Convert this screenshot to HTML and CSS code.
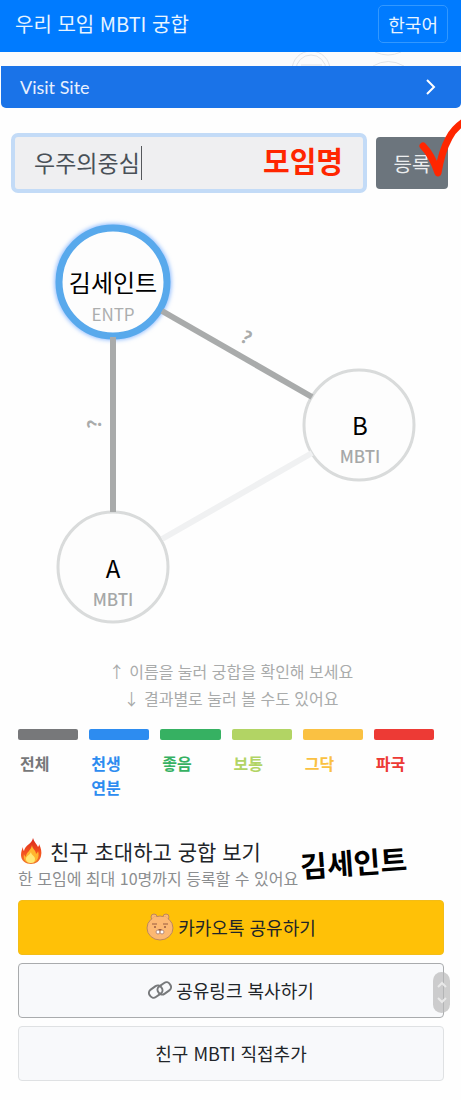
FILE: index.html
```
<!DOCTYPE html>
<html lang="ko">
<head>
  <meta charset="UTF-8">
  <meta name="viewport" content="width=device-width, initial-scale=1">
  <title>우리 모임 MBTI 궁합</title>
  <link rel="stylesheet" href="styles.css">
</head>
<body>
<header class="navbar">
  <h1>우리 모임 MBTI 궁합</h1>
  <button type="button" class="lang">한국어</button>
</header>
<div class="strip">
  <svg width="120" height="14" viewBox="0 0 120 14" fill="none" stroke="#e1e3e6" aria-hidden="true">
    <circle cx="20" cy="18" r="19"/>
    <circle cx="20" cy="18" r="15"/>
    <path d="M10 13h21"/>
    <path d="M84 0q13 6 26 0M82 14q15-9 31 0"/>
  </svg>
</div>
<a class="visit" href="#graph">
  <span>Visit Site</span>
  <svg width="12" height="18" viewBox="0 0 12 18" fill="none" stroke="#fff" stroke-width="2" aria-hidden="true"><path d="M2 2l7 7-7 7"/></svg>
</a>

<form class="group-form">
  <div class="field">
    <input type="text" aria-label="모임명" value="우주의중심">
    <span class="caret"></span>
    <span class="field-note">모임명</span>
  </div>
  <div class="submit">
    <button type="button">등록</button>
    <svg class="check" width="44" height="64" viewBox="0 0 44 64" fill="none" stroke="#ff2600" stroke-linecap="round" stroke-linejoin="round" stroke-width="7" aria-hidden="true">
      <path d="M4 29Q13 38 19 56C21 44 25 30 30 21Q35 11 46 4"/>
    </svg>
  </div>
</form>

<svg class="graph" id="graph" viewBox="0 0 461 465">
  <defs>
    <filter id="glow" x="-20%" y="-20%" width="140%" height="140%"><feGaussianBlur stdDeviation="2"/></filter>
  </defs>
  <circle class="glow" cx="113" cy="89" r="54"/>
  <circle class="node me" cx="113" cy="89" r="54"/>
  <circle class="node" cx="359" cy="232" r="55"/>
  <circle class="node" cx="113" cy="374" r="55"/>
  <line class="edge" x1="113" y1="144" x2="113" y2="319"/>
  <line class="edge" x1="162" y1="118" x2="312" y2="204"/>
  <line class="edge off" x1="162" y1="346" x2="312" y2="260"/>
  <text class="name" x="113" y="99">김세인트</text>
  <text class="type" x="113" y="128">ENTP</text>
  <text class="name" x="360" y="242">B</text>
  <text class="type empty" x="360" y="270">MBTI</text>
  <text class="name" x="113" y="385">A</text>
  <text class="type empty" x="113" y="413">MBTI</text>
  <text class="mark" transform="translate(243 150) rotate(30)">?</text>
  <text class="mark" transform="translate(101 231) rotate(-90)">?</text>
</svg>

<main>
  <p class="hint">↑ 이름을 눌러 궁합을 확인해 보세요<br>↓ 결과별로 눌러 볼 수도 있어요</p>

  <div class="legend">
    <button type="button" class="all">전체</button>
    <button type="button" class="best">천생연분</button>
    <button type="button" class="good">좋음</button>
    <button type="button" class="soso">보통</button>
    <button type="button" class="meh">그닥</button>
    <button type="button" class="bad">파국</button>
  </div>

  <section class="invite">
    <h2>
      <svg width="22" height="26" viewBox="0 0 22 26" aria-hidden="true">
        <defs>
          <linearGradient id="fire" x1="0" y1="0" x2="0" y2="1">
            <stop offset="0" stop-color="#d9271b"/>
            <stop offset=".55" stop-color="#f4511e"/>
            <stop offset="1" stop-color="#ef7a2c"/>
          </linearGradient>
        </defs>
        <path fill="url(#fire)" d="M13 0c1 4 4 6 5 9 1-1 1-2 1-3 2 4 3 8 2 12-1 5-5 8-10 8S1 23 1 17c0-3 1-6 2-8 0 2 0 3 1 4 1-6 8-7 9-13z"/>
        <path fill="#ffb52e" d="M12 7c0 4 4 5 4 9 1-1 2-2 2-3 2 6-1 12-7 12s-8-4-7-9c0 1 1 2 2 3 0-5 5-6 6-12z"/>
        <path fill="#ffe875" d="M11 14c0 3 4 4 4 7s-2 4-4 4-5-1-5-4 4-4 5-7z"/>
      </svg>
      친구 초대하고 궁합 보기
    </h2>
    <p class="limit">한 모임에 최대 10명까지 등록할 수 있어요</p>
    <span class="signature">김세인트</span>
  </section>

  <div class="actions">
    <button type="button" class="btn kakao">
      <svg width="28" height="28" viewBox="0 0 28 28" aria-hidden="true">
        <g stroke="#bd875b" fill="#fcb873">
          <circle cx="8" cy="4" r="3"/>
          <circle cx="20" cy="4" r="3"/>
          <ellipse cx="14" cy="15" rx="13" ry="12"/>
        </g>
        <path fill="#fcb873" d="M6 5l4-2 2 4-4 2zM22 5l-4-2-2 4 4 2z"/>
        <path stroke="#9a5c43" fill="none" d="M6 11h5M17 11h5"/>
        <circle cx="9" cy="14" r="1" fill="#9a5c43"/>
        <circle cx="19" cy="14" r="1" fill="#9a5c43"/>
        <ellipse cx="12" cy="19" rx="2" ry="2" fill="#fff" stroke="#b98b78"/>
        <ellipse cx="16" cy="19" rx="2" ry="2" fill="#fff" stroke="#b98b78"/>
        <path fill="#9a5c43" d="M12 16h4l-2 2z"/>
      </svg>
      카카오톡 공유하기
    </button>
    <button type="button" class="btn copy">
      <svg width="24" height="20" viewBox="0 0 24 20" fill="none" stroke="#77797b" stroke-width="2" aria-hidden="true">
        <rect x="1" y="7" width="14" height="9" rx="4" transform="rotate(-35 8 12)"/>
        <rect x="9" y="4" width="14" height="9" rx="4" transform="rotate(-35 16 8)"/>
      </svg>
      공유링크 복사하기
    </button>
    <button type="button" class="btn">친구 MBTI 직접추가</button>
    <span class="scroller">
      <svg width="17" height="41" viewBox="0 0 17 41" fill="none" stroke="#e9e9e9" stroke-width="2" aria-hidden="true"><path d="M5 15l4-4 4 4M5 26l4 4 4-4"/></svg>
    </span>
  </div>
</main>
</body>
</html>
```

FILE: styles.css
```
* { box-sizing: border-box; }
body { margin: 0; background: #fefefe; color: #212529; font-family: "Noto Sans CJK KR", sans-serif; overflow-x: hidden; }
h1, h2, p { margin: 0; font-weight: 400; }
button, input { font-family: inherit; }
button { cursor: pointer; }
svg { flex: none; }

.navbar { display: flex; justify-content: space-between; align-items: center; height: 52px; padding: 0 13px 5px 15px; background: #007bff; color: #e8f4ff; }
.navbar h1 { font-size: 20px; line-height: 28px; }
.lang { height: 38px; padding: 0 9px; border: 1px solid #3298ff; border-radius: 5px; background: none; color: #e8f4ff; font-size: 18px; line-height: 24px; }

.strip { display: flex; justify-content: flex-end; height: 14px; padding-right: 50px; background: #fafbfc; }
.visit { display: flex; justify-content: space-between; align-items: center; height: 42px; margin-left: 1px; padding: 0 24px 0 19px; border-radius: 0 0 5px 5px; background: #1a73e8; color: #e8f0fe; font: 18px Lato, sans-serif; text-decoration: none; }

.group-form { display: flex; align-items: center; gap: 9px; padding: 25px 13px 0 11px; }
.field { position: relative; flex: 1; display: flex; align-items: center; height: 60px; padding: 0 20px 6px 19px; border: 4px solid #c3dbf7; border-radius: 7px; background: #efeff1; }
.field input { flex: 1; min-width: 0; padding: 4px 0 0; border: 0; outline: 0; background: none; color: #495057; font-size: 23px; line-height: 34px; }
.caret { position: absolute; left: 126px; top: 9px; width: 1px; height: 34px; background: #55585c; }
.field-note { color: #ff2600; font-size: 29px; line-height: 40px; font-weight: 700; }
.submit { position: relative; }
.submit button { width: 72px; height: 52px; padding: 0; border: 0; border-radius: 4px; background: #6c757d; color: #eceeef; font-size: 20px; }
.check { position: absolute; left: 43px; top: -20px; }

.graph { display: block; width: 100%; font-family: inherit; }
.node { fill: #fdfdfd; stroke: #d9dbdb; stroke-width: 3; }
.node.me { stroke: #58a9ec; stroke-width: 7; }
.glow { fill: none; stroke: #8fbcff; stroke-width: 9; filter: url(#glow); }
.edge { stroke: #a9abab; stroke-width: 6; }
.edge.off { stroke: #f0f1f2; }
.graph text { text-anchor: middle; }
.name { fill: #000; font-size: 24px; }
.type { fill: #acaeae; font-size: 17px; }
.type.empty { font-weight: 500; fill: #a6a8a8; }
.mark { fill: #a9abab; font-size: 18px; font-weight: 700; }

main { padding: 0 17px 19px 18px; }
.hint { color: #a9abab; font-size: 16px; line-height: 27px; text-align: center; }

.legend { display: grid; grid-template-columns: repeat(6, 1fr); align-items: start; gap: 11px; padding: 17px 10px 0 0; }
.legend button { display: block; padding: 0 20px 0 2px; border: 0; background: none; color: var(--tone); font-size: 16px; line-height: 24px; font-weight: 700; text-align: left; }
.legend button::before { content: ""; display: block; height: 11px; margin: 0 -20px 11px -2px; border-radius: 2px; background: var(--tone); }
.all { --tone: #77787a; }
.best { --tone: #2d8cf0; }
.good { --tone: #36b162; }
.soso { --tone: #b2d464; }
.meh { --tone: #fac142; }
.bad { --tone: #ed3a35; }

.invite { position: relative; padding-top: 37px; }
.invite h2 { display: flex; align-items: center; gap: 8px; padding-left: 2px; font-size: 21px; line-height: 30px; }
.limit { color: #8b8d8f; font-size: 16px; line-height: 24px; }
.signature { position: absolute; left: 282px; top: 42px; color: #000; font-size: 29px; line-height: 40px; font-weight: 700; transform: rotate(-4deg); }

.actions { position: relative; display: flex; flex-direction: column; gap: 8px; padding-top: 10px; }
.btn { display: flex; justify-content: center; align-items: center; gap: 4px; height: 55px; padding-bottom: 3px; border: 1px solid #dfe1e3; border-radius: 4px; background: #f8f9fb; color: #212529; font-size: 18px; }
.btn.kakao { border-color: #f3bd18; background: #ffc107; }
.btn.copy { border-color: #a9abad; }
.scroller { position: absolute; right: -6px; top: 82px; width: 17px; height: 41px; border-radius: 9px; background: rgba(185, 185, 185, .7); }
```
